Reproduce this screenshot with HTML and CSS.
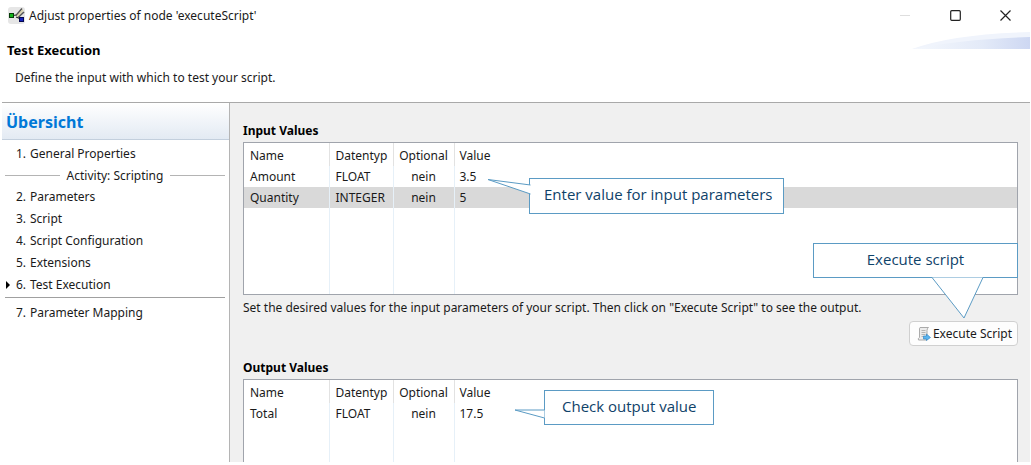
FILE: index.html
```
<!DOCTYPE html>
<html lang="en">
<head>
    <meta charset="UTF-8">
    <title>Adjust properties of node 'executeScript'</title>
    <link rel="stylesheet" href="styles.css">
</head>
<body>

<div class="window">
    <div class="titlebar">
        <svg class="app-icon" width="17" height="17" viewBox="0 0 17 17">
            <rect width="17" height="17" rx="3" fill="#e6e6e6"/>
            <path d="M4 8.5L9 8M8 10l5 2" stroke="#222" stroke-width="1.2"/>
            <path d="M8 8.500l6-7M10 10.500l6-5.500" stroke="#555" stroke-width="1.6"/>
            <path d="M9 9.500l6-6.500" stroke="#d9d2a8" stroke-width="1.6"/>
            <rect x="1.5" y="6.5" width="4" height="4" fill="#12b51c" stroke="#063c08"/>
            <rect x="11.5" y="10.5" width="4" height="4" fill="#1523bd" stroke="#050a50"/>
        </svg>
        <span class="title">Adjust properties of node 'executeScript'</span>
        <div class="controls">
            <button type="button" aria-label="Minimize" disabled>
                <svg width="11" height="11" viewBox="0 0 11 11"><path d="M0 5.5h10" stroke="#dedede"/></svg>
            </button>
            <button type="button" aria-label="Maximize">
                <svg width="11" height="11" viewBox="0 0 11 11"><rect x=".7" y=".7" width="9.6" height="9.6" rx="1" fill="none" stroke="#222" stroke-width="1.2"/></svg>
            </button>
            <button type="button" aria-label="Close">
                <svg width="11" height="11" viewBox="0 0 11 11"><path d="M.5 .5l10 10M10.5 .5l-10 10" stroke="#222" stroke-width="1.2"/></svg>
            </button>
        </div>
    </div>

    <div class="banner">
        <h1>Test Execution</h1>
        <p>Define the input with which to test your script.</p>
        <svg class="swoosh" width="118" height="18" viewBox="0 0 118 18">
            <defs>
                <linearGradient id="fade">
                    <stop offset="0" stop-color="#f5f8fd"/>
                    <stop offset=".6" stop-color="#e3eaf8"/>
                    <stop offset="1" stop-color="#cdd7f2"/>
                </linearGradient>
            </defs>
            <path d="M0 17Q40 2 118 0V17Z" fill="#f0f4fc"/>
            <path d="M0 17Q50 7 118 5V17Z" fill="url(#fade)"/>
        </svg>
    </div>

    <div class="content">
        <nav class="sidebar">
            <h2>Übersicht</h2>
            <ul>
                <li><a href="#"><span class="num">1.</span>General Properties</a></li>
                <li class="group">Activity: Scripting</li>
                <li><a href="#"><span class="num">2.</span>Parameters</a></li>
                <li><a href="#"><span class="num">3.</span>Script</a></li>
                <li><a href="#"><span class="num">4.</span>Script Configuration</a></li>
                <li><a href="#"><span class="num">5.</span>Extensions</a></li>
                <li class="current"><a href="#"><span class="num">6.</span>Test Execution</a></li>
                <li class="line"></li>
                <li><a href="#"><span class="num">7.</span>Parameter Mapping</a></li>
            </ul>
        </nav>

        <main>
            <h3>Input Values</h3>
            <div class="panel input-panel">
                <table>
                    <thead>
                        <tr><th class="name">Name</th><th class="type">Datentyp</th><th class="optional">Optional</th><th>Value</th></tr>
                    </thead>
                    <tbody>
                        <tr><td>Amount</td><td>FLOAT</td><td class="optional">nein</td><td>3.5</td></tr>
                        <tr class="selected"><td>Quantity</td><td>INTEGER</td><td class="optional">nein</td><td>5</td></tr>
                        <tr class="rest"><td></td><td></td><td></td><td></td></tr>
                    </tbody>
                </table>
                <div class="callout enter-value">
                    Enter value for input parameters
                    <svg width="44" height="18" viewBox="0 0 44 18"><path d="M43.5 7L1 1.5L43.5 16" fill="#fff" stroke="#5b9bc4"/></svg>
                </div>
                <div class="callout execute">
                    Execute script
                    <svg width="52" height="42" viewBox="0 0 52 42"><path d="M0 .5L32 41L51 .5" fill="#fff" stroke="#5b9bc4"/></svg>
                </div>
            </div>
            <p class="hint">Set the desired values for the input parameters of your script. Then click on "Execute Script" to see the output.</p>
            <div class="actions">
                <button type="button" class="run">
                    <svg width="14" height="14" viewBox="0 0 14 14">
                        <path d="M3 .5h8.5q-1.500 1-1.500 3v9.500H1.500q-1-1.500 1-2.500V2Q2.500 1 3 .5Z" fill="#ececec" stroke="#aaa"/>
                        <path d="M4.500 3.500h4M4.500 5.500h4M4.500 7.500h4M4.500 9.500h2" stroke="#b5b5b5"/>
                        <path d="M6.500 9h3V7l4 3.500l-4 3V12h-3Z" fill="#5cb5ee" stroke="#2680c4" stroke-width=".6"/>
                    </svg>
                    Execute Script
                </button>
            </div>

            <h3>Output Values</h3>
            <div class="panel output-panel">
                <table>
                    <thead>
                        <tr><th class="name">Name</th><th class="type">Datentyp</th><th class="optional">Optional</th><th>Value</th></tr>
                    </thead>
                    <tbody>
                        <tr><td>Total</td><td>FLOAT</td><td class="optional">nein</td><td>17.5</td></tr>
                        <tr class="rest"><td></td><td></td><td></td><td></td></tr>
                    </tbody>
                </table>
                <div class="callout check-value">
                    Check output value
                    <svg width="31" height="10" viewBox="0 0 31 10"><path d="M30.5 1H1L30.5 9" fill="#fff" stroke="#5b9bc4"/></svg>
                </div>
            </div>
        </main>
    </div>
</div>

</body>
</html>
```
FILE: styles.css
```
*{
    margin: 0;
    padding: 0;
    box-sizing: border-box;
}
body{
    font-family: "Noto Sans", "Open Sans", sans-serif;
    font-size: 12px;
    line-height: 22px;
    color: #1a1a1a;
    background: #fff;
}
svg{
    display: block;
}
.window{
    display: flex;
    flex-direction: column;
    height: 100vh;
    padding: 0 1px 3px 2px;
}
.titlebar{
    display: flex;
    align-items: center;
    height: 31px;
    padding-left: 6px;
}
.title{
    margin-left: 4px;
}
.controls{
    display: flex;
    margin-left: auto;
}
.controls button{
    display: flex;
    align-items: center;
    justify-content: center;
    width: 50px;
    height: 30px;
    border: none;
    background: none;
}
.banner{
    position: relative;
    height: 72px;
    padding: 7px 5px;
    border-bottom: 1px solid #a9a9a9;
}
.banner h1{
    font-size: 13px;
    line-height: 24px;
    color: #000;
}
.banner p{
    padding: 5px 8px;
}
.swoosh{
    position: absolute;
    top: 1px;
    right: 0;
}
.content{
    display: flex;
    flex: 1;
    min-height: 0;
}
.sidebar{
    width: 228px;
    border-right: 1px solid #b4b4b4;
}
.sidebar h2{
    height: 37px;
    padding-left: 4px;
    font-size: 16px;
    line-height: 39px;
    color: #0078d7;
    background: linear-gradient(#fff, #e3eaf3);
    border-bottom: 1px solid #c3cfdd;
}
.sidebar ul{
    padding: 3px 4px 0 3px;
    list-style: none;
}
.sidebar a{
    display: flex;
    padding-left: 11px;
    color: #1a1a1a;
    text-decoration: none;
}
.num{
    width: 14px;
}
.group{
    display: flex;
    align-items: center;
    gap: 7px;
    line-height: 21px;
}
.group:before, .group:after{
    content: "";
    flex: 1;
    height: 1px;
    background: #b4b4b4;
}
.current{
    position: relative;
}
.current:before{
    content: "";
    position: absolute;
    left: 1px;
    top: 7px;
    border: 4px solid transparent;
    border-left-color: #000;
    border-right: none;
}
.line{
    height: 1px;
    margin: 1px 0 4px;
    background: #a0a0a0;
}
main{
    display: flex;
    flex-direction: column;
    flex: 1;
    min-width: 0;
    padding: 16px 12px 0 13px;
    background: #f0f0f0;
}
main h3{
    font-size: 12px;
    line-height: 23px;
    color: #000;
}
.panel{
    position: relative;
    background: #fff;
    border: 1px solid #a0a4ac;
}
.input-panel{
    height: 153px;
}
.output-panel{
    flex: 1;
    border-bottom: none;
}
table{
    width: 100%;
    height: 100%;
    table-layout: fixed;
    border-collapse: collapse;
}
th, td{
    height: 21px;
    padding: 0 6px;
    line-height: 20px;
    font-weight: normal;
    text-align: left;
    border-right: 1px solid #e6f0f8;
}
th{
    height: 23px;
    padding-top: 2px;
    border-right-color: #e2e2e2;
}
th:last-child, td:last-child{
    padding-left: 5px;
    border-right: none;
}
.name{
    width: 85px;
}
.type{
    width: 64px;
    padding-right: 0;
}
td:nth-child(2){
    padding-right: 0;
}
.optional{
    width: 61px;
    padding-left: 0;
    padding-right: 0;
    text-align: center;
}
.selected td{
    background: #d9d9d9;
}
.rest td{
    height: auto;
}
.callout{
    position: absolute;
    padding-left: 14px;
    font-family: "Open Sans", sans-serif;
    font-size: 15px;
    line-height: 30px;
    color: #0f4269;
    background: #fff;
    border: 1px solid #5b9bc4;
}
.callout svg{
    position: absolute;
}
.enter-value{
    left: 285px;
    top: 35px;
    width: 255px;
    height: 36px;
}
.enter-value svg{
    right: 252px;
    top: -1px;
}
.execute{
    right: -1px;
    top: 100px;
    z-index: 1;
    width: 205px;
    height: 35px;
    padding: 0;
    text-align: center;
}
.execute svg{
    right: 33px;
    top: 33px;
}
.check-value{
    left: 300px;
    top: 10px;
    width: 170px;
    height: 35px;
    padding-left: 17px;
}
.check-value svg{
    right: 168px;
    top: 18px;
}
.hint{
    padding-top: 2px;
    white-space: nowrap;
}
.actions{
    display: flex;
    justify-content: flex-end;
    padding: 2px 0 10px;
}
.run{
    display: flex;
    align-items: center;
    gap: 2px;
    height: 25px;
    padding: 0 5px 0 7px;
    font: inherit;
    color: #1a1a1a;
    background: #fdfdfd;
    border: 1px solid #d0d0d0;
    border-radius: 4px;
}
```
